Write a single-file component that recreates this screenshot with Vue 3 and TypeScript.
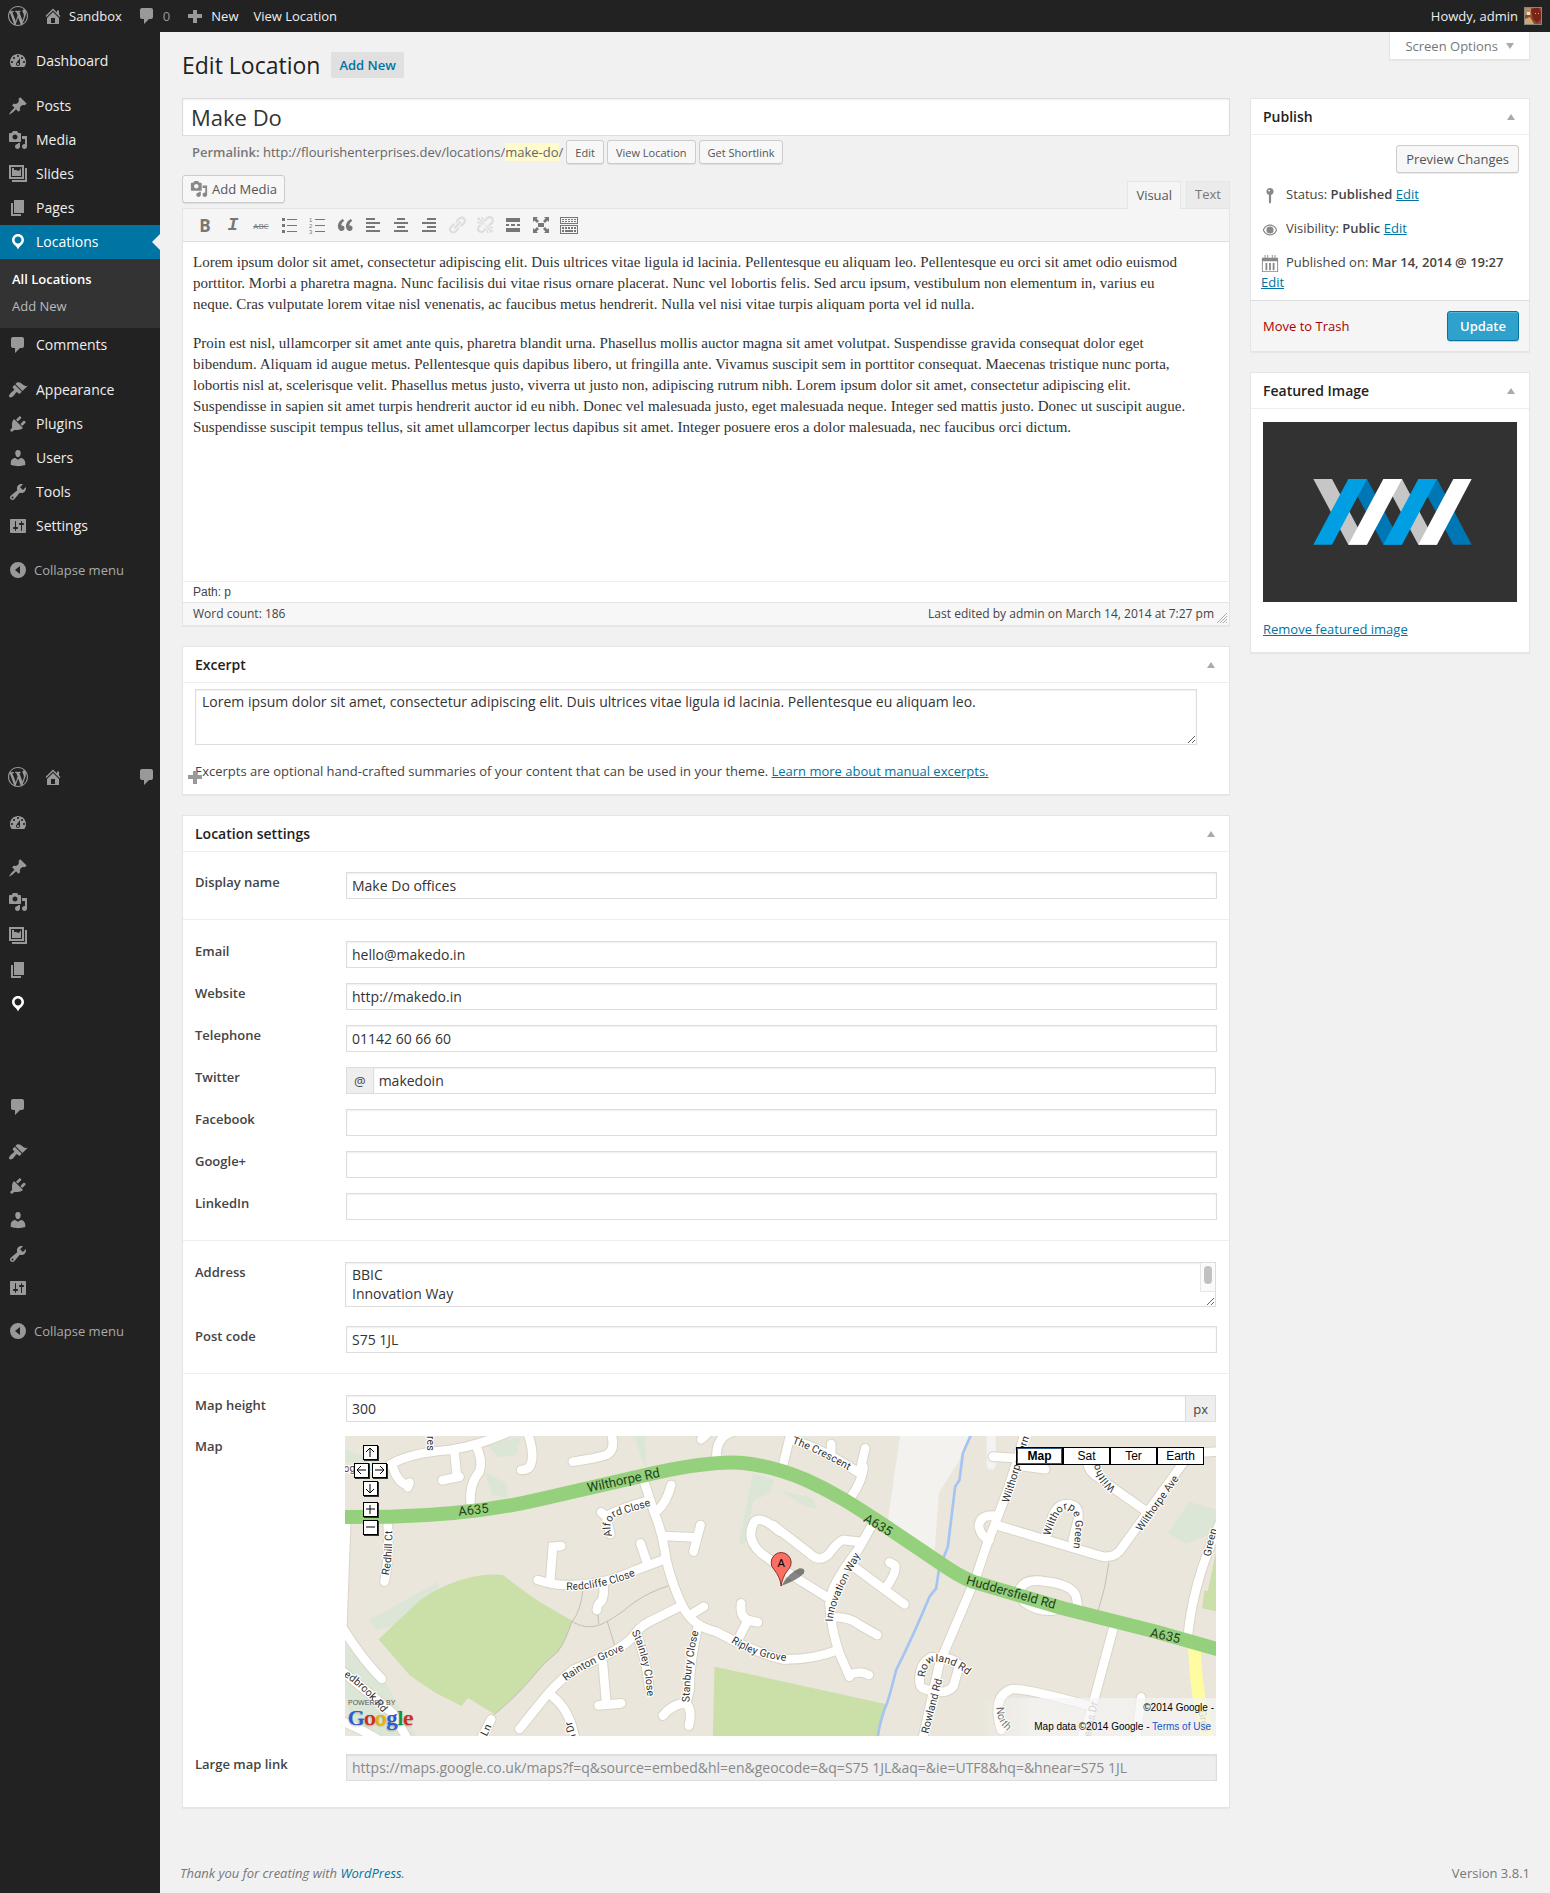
<script setup lang="ts">
import { h, ref } from 'vue'

const icons: Record<string, string> = {
  wordpress: 'M20 10c0-5.51-4.49-10-10-10C4.48 0 0 4.49 0 10c0 5.52 4.48 10 10 10 5.51 0 10-4.48 10-10zM7.78 15.37L4.37 6.22c.55-.02 1.17-.08 1.17-.08.5-.06.44-1.13-.06-1.11 0 0-1.45.11-2.37.11-.18 0-.37 0-.58-.01C4.12 2.69 6.87 1.11 10 1.11c2.33 0 4.45.87 6.05 2.34-.68-.11-1.65.39-1.65 1.58 0 .74.45 1.36.9 2.1.35.61.55 1.36.55 2.46 0 1.49-1.4 5-1.4 5l-3.03-8.37c.54-.02.82-.17.82-.17.5-.05.44-1.25-.06-1.22 0 0-1.44.12-2.38.12-.87 0-2.33-.12-2.33-.12-.5-.03-.56 1.2-.06 1.22l.92.08 1.26 3.41zM17.41 10c.24-.64.74-1.87.43-4.25.7 1.29 1.05 2.71 1.05 4.25 0 3.29-1.73 6.24-4.4 7.78.97-2.59 1.94-5.2 2.92-7.78zM6.1 18.09C3.12 16.65 1.11 13.53 1.11 10c0-1.3.23-2.48.72-3.59C3.25 10.3 4.67 14.2 6.1 18.09zm4.03-6.63l2.58 6.98c-.86.29-1.76.45-2.71.45-.79 0-1.57-.11-2.29-.33.81-2.38 1.62-4.74 2.42-7.1z',
  home: 'M16 8.5l1.53 1.53-1.06 1.06L10 4.6l-6.47 6.49-1.06-1.06L10 2.5l4 4v-2h2v4zm-6-2.46l6 5.99V18H4v-5.97zM12 17v-5H8v5h4z',
  comment: 'M5 2h9c1.1 0 2 .9 2 2v7c0 1.1-.9 2-2 2h-2l-5 5v-5H5c-1.1 0-2-.9-2-2V4c0-1.1.9-2 2-2z',
  plus: 'M8 4h4v4h5v4h-5v5H8v-5H3V8h5z',
  dashboard: 'M3.76 16h12.48c1.1-1.37 1.76-3.11 1.76-5 0-4.42-3.58-8-8-8s-8 3.58-8 8c0 1.89.66 3.63 1.76 5zM10 4c.55 0 1 .45 1 1s-.45 1-1 1-1-.45-1-1 .45-1 1-1zM6 6c.55 0 1 .45 1 1s-.45 1-1 1-1-.45-1-1 .45-1 1-1zm8 0c.55 0 1 .45 1 1s-.45 1-1 1-1-.45-1-1 .45-1 1-1zm-5.37 5.55L12 7v6c0 1.1-.9 2-2 2s-2-.9-2-2c0-.57.24-1.08.63-1.45zM4 10c.55 0 1 .45 1 1s-.45 1-1 1-1-.45-1-1 .45-1 1-1zm12 0c.55 0 1 .45 1 1s-.45 1-1 1-1-.45-1-1 .45-1 1-1zm-5 3c0-.55-.45-1-1-1s-1 .45-1 1 .45 1 1 1 1-.45 1-1z',
  pin: 'M10.44 3.02l1.82-1.82 6.36 6.35-1.83 1.82c-1.05-.68-2.48-.57-3.41.36l-.75.75c-.92.93-1.04 2.35-.35 3.41l-1.83 1.82-2.41-2.41-2.8 2.79c-.42.42-3.38 2.71-3.8 2.29s1.86-3.39 2.28-3.81l2.79-2.79L4.1 9.36l1.83-1.82c1.05.69 2.48.57 3.4-.36l.75-.75c.93-.92 1.05-2.35.36-3.41z',
  media: 'M13 11V4c0-.55-.45-1-1-1h-1.67L9 1H5L3.67 3H2c-.55 0-1 .45-1 1v7c0 .55.45 1 1 1h10c.55 0 1-.45 1-1zM7 4.5c1.38 0 2.5 1.12 2.5 2.5S8.38 9.5 7 9.5 4.5 8.38 4.5 7 5.62 4.5 7 4.5zM14 6h5v10.5c0 1.38-1.12 2.5-2.5 2.5S14 17.88 14 16.5s1.12-2.5 2.5-2.5c.17 0 .34.02.5.05V9h-3V6zm-4 8.05V13h2v3.5c0 1.38-1.12 2.5-2.5 2.5S7 17.88 7 16.5 8.12 14 9.5 14c.17 0 .34.02.5.05z',
  slides: 'M1 1h15v14H1zM3 3v10h11V3zM4 4h2v2h2l3 1 2-3v8H4zM17 4h2v14H4v-2h13z',
  page: 'M6 15V2h10v13H6zm-1 1h8v2H3V5h2v11z',
  location: 'M10 2C6.69 2 4 4.69 4 8c0 2.02 1.17 3.71 2.53 4.89.43.37 1.18.96 1.85 1.83.74.97 1.41 2.01 1.62 2.71.21-.7.88-1.74 1.62-2.71.67-.87 1.42-1.46 1.85-1.83C14.83 11.71 16 10.02 16 8c0-3.31-2.69-6-6-6zm0 2.56c1.9 0 3.44 1.54 3.44 3.44S11.9 11.44 10 11.44 6.56 9.9 6.56 8 8.1 4.56 10 4.56z',
  brush: 'M14.48 11.06L7.41 3.99l1.5-1.5c.5-.56 2.3-.47 3.51.32 1.21.8 1.43 1.28 2.91 2.1 1.18.64 2.45 1.26 4.45.85zm-.71.71L6.7 4.7 4.93 6.47c-.39.39-.39 1.02 0 1.41l1.06 1.06c.39.39.39 1.03 0 1.42-.6.6-1.43 1.11-2.21 1.69-.35.26-.7.53-1.01.84C1.43 14.23.4 16.08 1.4 17.07c.99 1 2.84-.03 4.18-1.36.31-.31.58-.66.85-1.02.57-.78 1.08-1.61 1.69-2.21.39-.39 1.02-.39 1.41 0l1.06 1.06c.39.39 1.02.39 1.41 0z',
  plug: 'M13.11 4.36L9.87 7.6 8 5.73l3.24-3.24c.35-.34 1.05-.2 1.56.32.52.51.66 1.21.31 1.55zm-8 1.77l.91-1.12 9.01 9.01-1.19.84c-.71.71-2.63 1.16-3.82 1.16H6.14L4.9 17.26c-.59.59-1.54.59-2.12 0-.59-.58-.59-1.53 0-2.12l1.24-1.24v-3.88c0-1.13.4-3.19 1.09-3.89zm7.26 3.97l3.24-3.24c.34-.35 1.04-.21 1.55.31.52.51.66 1.21.31 1.55l-3.24 3.25z',
  user: 'M10 9.25c-2.27 0-2.73-3.44-2.73-3.44C7 4.02 7.82 2 9.97 2c2.16 0 2.98 2.02 2.71 3.81 0 0-.41 3.44-2.68 3.44zm0 2.57L12.72 10c2.39 0 4.52 2.33 4.52 4.53v2.49s-3.65 1.13-7.24 1.13c-3.65 0-7.24-1.13-7.24-1.13v-2.49c0-2.25 1.94-4.48 4.47-4.48z',
  wrench: 'M16.68 9.77c-1.34 1.34-3.3 1.67-4.95.99l-5.41 6.52c-.99.99-2.59.99-3.58 0s-.99-2.59 0-3.57l6.52-5.42c-.68-1.65-.35-3.61.99-4.95 1.28-1.28 3.12-1.62 4.72-1.06l-2.89 2.89 2.82 2.82 2.86-2.87c.53 1.58.18 3.39-1.08 4.65zM3.81 16.21c.4.39 1.04.39 1.43 0 .4-.4.4-1.04 0-1.43-.39-.4-1.03-.4-1.43 0-.39.39-.39 1.03 0 1.43z',
  sliders: 'M18 16V4c0-.55-.45-1-1-1H3c-.55 0-1 .45-1 1v12c0 .55.45 1 1 1h14c.55 0 1-.45 1-1zM8 11h1c.55 0 1 .45 1 1s-.45 1-1 1H8v1.5c0 .28-.22.5-.5.5s-.5-.22-.5-.5V13H6c-.55 0-1-.45-1-1s.45-1 1-1h1V5.5c0-.28.22-.5.5-.5s.5.22.5.5V11zm5-2h-1c-.55 0-1-.45-1-1s.45-1 1-1h1V5.5c0-.28.22-.5.5-.5s.5.22.5.5V7h1c.55 0 1 .45 1 1s-.45 1-1 1h-1v5.5c0 .28-.22.5-.5.5s-.5-.22-.5-.5V9z',
  collapse: 'M10 2a8 8 0 1 0 0 16a8 8 0 1 0 0-16zM12 6v8L7 10z',
  ul: 'M3 3h3v3H3zM3 9h3v3H3zM3 15h3v3H3zM8 4h10v1H8zM8 10h10v1H8zM8 16h10v1H8z',
  ol: 'M8 4h10v1H8zM8 10h10v1H8zM8 16h10v1H8z',
  quote: 'M9.49 13.22c0-.74-.2-1.38-.61-1.9-.62-.78-1.83-.88-2.53-.72-.29-1.65 1.11-3.75 2.92-4.65L7.88 4c-2.73 1.3-5.42 4.28-4.96 8.05C3.21 14.43 4.59 16 6.54 16c.85 0 1.56-.25 2.12-.75s.83-1.18.83-2.03zm8.05 0c0-.74-.2-1.38-.61-1.9-.63-.78-1.83-.88-2.53-.72-.29-1.65 1.11-3.75 2.92-4.65L15.93 4c-2.73 1.3-5.41 4.28-4.95 8.05.29 2.38 1.66 3.95 3.61 3.95.85 0 1.56-.25 2.12-.75s.83-1.18.83-2.03z',
  left: 'M12 5V3H3v2h9zm5 4V7H3v2h14zm-5 4v-2H3v2h9zm5 4v-2H3v2h14z',
  center: 'M14 5V3H6v2h8zm3 4V7H3v2h14zm-3 4v-2H6v2h8zm3 4v-2H3v2h14z',
  right: 'M17 5V3H8v2h9zm0 4V7H3v2h14zm0 4v-2H8v2h9zm0 4v-2H3v2h14z',
  link: 'M17.74 2.76c1.68 1.69 1.68 4.41 0 6.1l-1.53 1.52c-1.12 1.12-2.7 1.47-4.14 1.09l2.62-2.61.76-.77.76-.76c.84-.84.84-2.2 0-3.04-.84-.85-2.2-.85-3.04 0l-.77.76-3.38 3.38c-.37-1.44-.02-3.02 1.1-4.14l1.52-1.53c1.69-1.68 4.42-1.68 6.1 0zM8.59 13.43l5.34-5.34c.42-.42.42-1.1 0-1.52-.44-.43-1.13-.39-1.53 0l-5.33 5.34c-.42.42-.42 1.1 0 1.52.44.43 1.13.39 1.52 0zm-.76 2.29l4.14-4.15c.38 1.44.03 3.02-1.09 4.14l-1.52 1.53c-1.69 1.68-4.41 1.68-6.1 0-1.68-1.68-1.68-4.42 0-6.1l1.53-1.52c1.12-1.12 2.7-1.47 4.14-1.1l-4.14 4.15c-.85.84-.85 2.2 0 3.05.84.84 2.2.84 3.04 0z',
  unlink: 'M17.74 2.26c1.68 1.69 1.68 4.41 0 6.1l-1.53 1.52c-.32.33-.69.58-1.08.77L13 10l1.69-1.64.76-.77.76-.76c.84-.84.84-2.2 0-3.04-.84-.85-2.2-.85-3.04 0l-.77.76-.76.76L10 7l-.65-2.14c.19-.38.44-.75.77-1.07l1.52-1.53c1.69-1.68 4.42-1.68 6.1 0zM2 4l8 6-6-8zm4-2l4 8-2-8H6zM2 6l8 4-8-2V6zm7.36 7.69L10 13l.74 2.35-1.38 1.39c-1.69 1.68-4.41 1.68-6.1 0-1.68-1.68-1.68-4.42 0-6.1l1.39-1.38L7 10l-.69.64-1.52 1.53c-.85.84-.85 2.2 0 3.04.84.85 2.2.85 3.04 0zM18 16l-8-6 6 8zm-4 2l-4-8 2 8h2zm4-4l-8-4 8 2v2z',
  more: 'M17 7V3H3v4h14zM6 11V9H3v2h3zm6 0V9H8v2h4zm5 0V9h-3v2h3zm0 6v-4H3v4h14z',
  full: 'M2 2h5L5.500 3.500 8 6 6 8 3.500 5.500 2 7zM18 2v5l-1.500-1.500L14 8l-2-2 2.500-2.500L13 2zM2 18v-5l1.500 1.500L6 12l2 2-2.500 2.500L7 18zM18 18h-5l1.500-1.500L12 14l2-2 2.500 2.500L18 13zM7 8h6v4H7z',
  keys: 'M1 2h18v7H1zM2 3v5h16V3zM3 4h2v1H3zM6 4h2v1H6zM9 4h2v1H9zM12 4h2v1h-2zM15 4h2v1h-2zM3 6h2v1H3zM6 6h2v1H6zM9 6h2v1H9zM12 6h2v1h-2zM15 6h2v1h-2zM1 10h18v9H1zM2 11v7h16v-7zM3 12h2v2H3zM6 12h2v2H6zM9 12h2v2H9zM12 12h2v2h-2zM15 12h2v2h-2zM3 15h2v2H3zM6 15h8v2H6zM15 15h2v2h-2z',
  status: 'M10 1a4 4 0 0 1 1.200 7.800V17L10 19l-1.200-2V8.800A4 4 0 0 1 10 1zM9 3a1 1 0 1 0 0 2a1 1 0 1 0 0-2z',
  eye: 'M10 4C6 4 3 7 2 10c1 3 4 6 8 6s7-3 8-6c-1-3-4-6-8-6zM10 5.200c3.300 0 5.700 2.300 6.700 4.800-1 2.500-3.400 4.800-6.700 4.800S4.300 12.500 3.300 10c1-2.500 3.400-4.800 6.700-4.800zM10 6a4 4 0 1 0 0 8a4 4 0 1 0 0-8z',
  calendar: 'M4 0h1v3h2V0h1v3h4V0h1v3h2V0h1v3h3v16H1V3h3zM2 7v11h16V7zM5 9h2v8H5zM9 9h2v8H9zM13 9h2v8h-2z',
}

const Icon = (props: { name: string }) =>
  h('svg', { viewBox: '0 0 20 20', width: 20, height: 20, 'aria-hidden': 'true' }, [
    h('path', { d: icons[props.name], fill: 'currentColor', 'fill-rule': 'evenodd' }),
  ])

interface MenuItem { label: string; icon: string; gap?: boolean; active?: boolean }
const menu: MenuItem[] = [
  { label: 'Dashboard', icon: 'dashboard' },
  { label: 'Posts', icon: 'pin', gap: true },
  { label: 'Media', icon: 'media' },
  { label: 'Slides', icon: 'slides' },
  { label: 'Pages', icon: 'page' },
  { label: 'Locations', icon: 'location', active: true },
  { label: 'Comments', icon: 'comment' },
  { label: 'Appearance', icon: 'brush', gap: true },
  { label: 'Plugins', icon: 'plug' },
  { label: 'Users', icon: 'user' },
  { label: 'Tools', icon: 'wrench' },
  { label: 'Settings', icon: 'sliders' },
]

const tools: { name: string; label: string; off?: boolean }[] = [
  { name: 'bold', label: 'Bold' },
  { name: 'italic', label: 'Italic' },
  { name: 'strike', label: 'Strikethrough' },
  { name: 'ul', label: 'Bulleted list' },
  { name: 'ol', label: 'Numbered list' },
  { name: 'quote', label: 'Blockquote' },
  { name: 'left', label: 'Align left' },
  { name: 'center', label: 'Align center' },
  { name: 'right', label: 'Align right' },
  { name: 'link', label: 'Insert link', off: true },
  { name: 'unlink', label: 'Remove link', off: true },
  { name: 'more', label: 'Insert More tag' },
  { name: 'full', label: 'Fullscreen' },
  { name: 'keys', label: 'Toolbar toggle' },
]

const title = ref('Make Do')
const excerpt = ref('Lorem ipsum dolor sit amet, consectetur adipiscing elit. Duis ultrices vitae ligula id lacinia. Pellentesque eu aliquam leo.')
const address = ref('BBIC\nInnovation Way')
const displayName = ref('Make Do offices')
const postCode = ref('S75 1JL')
const mapHeight = ref('300')
const mapLink = 'https://maps.google.co.uk/maps?f=q&source=embed&hl=en&geocode=&q=S75 1JL&aq=&ie=UTF8&hq=&hnear=S75 1JL'

const contacts = ref([
  { id: 'email', label: 'Email', value: 'hello@makedo.in', prefix: '' },
  { id: 'website', label: 'Website', value: 'http://makedo.in', prefix: '' },
  { id: 'telephone', label: 'Telephone', value: '01142 60 66 60', prefix: '' },
  { id: 'twitter', label: 'Twitter', value: 'makedoin', prefix: '@' },
  { id: 'facebook', label: 'Facebook', value: '', prefix: '' },
  { id: 'google', label: 'Google+', value: '', prefix: '' },
  { id: 'linkedin', label: 'LinkedIn', value: '', prefix: '' },
])

/* Map geometry: west and east halves, three units to a CSS pixel. */
const west = [
  'M150 105C190 80 260 65 330 60C400 50 450 30 500 10', 'M160 110Q175 160 205 165M210 158L205 172', 'M345 65L352 140M308 151L360 140',
  'M408 45Q432 90 420 125Q390 160 393 215', 'M565 10Q585 70 575 100Q570 120 545 120', 'M815 10Q830 60 800 75Q770 85 700 95',
  'M1131 80Q1130 20 1180 5', 'M1085 28L1110 5', 'M145 285Q150 380 135 455',
  'M995 165Q980 220 955 240', 'M975 318L1065 322M1083 285L1062 365', 'M970 390L890 420Q780 470 680 465Q640 465 595 450',
  'M665 348L640 350L632 455', 'M903 340L925 405', 'M792 470Q795 500 785 515Q775 520 772 540', 'M915 215Q830 240 800 260L785 247M800 260L812 312',
  'M1020 530L930 575Q900 590 880 620Q850 660 700 720Q640 770 610 810L540 897', 'M890 610Q920 680 930 780',
  'M1075 590Q1050 700 1050 780L1040 820Q1000 820 970 857M1040 820Q1060 840 1048 887', 'M790 700L800 815M777 826L845 820',
  'M640 800Q690 840 705 920', 'M10 595Q70 690 127 747', 'M10 725Q90 790 160 850L200 920', 'M10 875Q60 895 110 925',
  'M455 868L425 925', 'M1060 550L1093 530', 'M1205 520Q1200 560 1225 570L1255 577M1225 570L1200 620',
  'M1320 305Q1265 255 1245 275Q1215 325 1265 370L1340 425L1460 500', 'M20 280Q15 400 8 600',
  'M912 150L945 250Q970 310 980 390Q1000 470 1030 530Q1060 590 1130 605Q1250 670 1330 688Q1420 690 1495 660',
]
const east = [
  'M30 28Q120 50 240 130L257 55M252 110Q250 150 215 200', 'M155 42L155 70', 'M12 100L30 25',
  'M275 290L235 360Q150 470 150 520Q155 600 180 670L210 740M210 735Q240 720 268 735', 'M160 562Q210 560 240 585L293 615',
  'M225 412L375 523M325 465Q355 420 345 405L330 397', 'M-20 285L90 370Q120 400 148 372Q175 335 190 330L235 335',
  'M735 10Q710 110 670 220L620 350L590 440L480 700L430 925', 'M655 258Q600 250 598 290Q605 322 630 330',
  'M660 288L970 380Q1010 385 1030 350L1210 100Q1240 60 1330 66', 'M805 310Q820 222 860 222Q905 222 895 270L880 330',
  'M925 100Q925 125 960 145L1095 240', 'M640 80L720 85M720 107L797 118', 'M715 490Q730 440 800 455Q880 465 890 500L895 530',
  'M732 515Q780 550 830 540', 'M420 750Q420 700 455 682Q540 680 537 715L522 768Q500 800 430 775Q420 770 420 750',
  'M1000 600L930 860L905 925', 'M665 900Q635 800 695 778Q720 770 920 825', 'M1085 802L1070 925', 'M1330 260Q1240 450 1225 620',
]

interface RoadName { id: string; d: string; text: string; east?: boolean; faint?: boolean; major?: boolean }
const names: RoadName[] = [
  { id: 'n1', d: 'M746 187L1000 132', text: 'Wilthorpe Rd', major: true },
  { id: 'n2', d: 'M358 258L470 245', text: 'A635', major: true },
  { id: 'n3', d: 'M818 318Q798 262 850 253L950 222', text: 'Alford Close' },
  { id: 'n4', d: 'M148 436Q162 360 157 270', text: 'Redhill Ct' },
  { id: 'n5', d: 'M680 480Q790 482 920 423', text: 'Redcliffe Close' },
  { id: 'n6', d: 'M680 754Q740 705 892 646', text: 'Rainton Grove' },
  { id: 'n7', d: 'M876 606Q920 690 925 830', text: 'Stainley Close' },
  { id: 'n8', d: 'M1050 817Q1050 700 1086 570', text: 'Stanbury Close' },
  { id: 'n9', d: 'M1174 637Q1260 695 1400 697', text: 'Ripley Grove' },
  { id: 'n10', d: 'M442 920L470 860', text: 'Ln' },
  { id: 'n11', d: 'M712 928L686 840', text: 'n Dr' },
  { id: 'n12', d: 'M12 738Q80 780 170 900', text: 'edbrook Rd' },
  { id: 'n13', d: 'M262 18L262 90', text: 'res' },
  { id: 'n14', d: 'M12 126L120 122', text: 'og Rd' },
  { id: 'n15', d: 'M37 40Q110 65 240 140', text: 'The Crescent', east: true },
  { id: 'n16', d: 'M250 273L360 338', text: 'A635', east: true, major: true },
  { id: 'n17', d: 'M160 575Q160 510 270 330', text: 'Innovation Way', east: true },
  { id: 'n18', d: 'M558 462L880 553', text: 'Huddersfield Rd', east: true, major: true },
  { id: 'n19', d: 'M1110 620L1230 647', text: 'A635', east: true, major: true },
  { id: 'n20', d: 'M688 220L762 -20', text: 'Wilthorpe Farm', east: true },
  { id: 'n21', d: 'M812 318Q835 238 862 238Q900 238 882 350', text: 'Wilthorpe Green', east: true },
  { id: 'n22', d: 'M1010 172Q950 130 958 60', text: 'Wilthorpe', east: true },
  { id: 'n23', d: 'M1085 306L1230 102', text: 'Wilthorpe Ave', east: true },
  { id: 'n24', d: 'M1294 380Q1300 330 1330 250', text: 'Green', east: true },
  { id: 'n25', d: 'M437 742Q440 695 470 695Q520 695 575 745', text: 'Rowland Rd', east: true },
  { id: 'n26', d: 'M446 912L502 695', text: 'Rowland Rd', east: true },
  { id: 'n27', d: 'M652 832Q650 890 710 920', text: 'North', east: true },
  { id: 'n28', d: 'M930 940L962 775', text: 'ueens Dr', east: true, faint: true },
  { id: 'n29', d: 'M1256 842L1280 960', text: 'Gree', east: true, faint: true },
]
</script>

<template>
  <div class="page">
    <header class="bar">
      <a href="#" class="bar-item dim" aria-label="About WordPress"><Icon name="wordpress" /></a>
      <a href="#" class="bar-item"><Icon name="home" class="dim" />Sandbox</a>
      <a href="#" class="bar-item dim"><Icon name="comment" />0</a>
      <a href="#" class="bar-item"><Icon name="plus" class="dim" />New</a>
      <a href="#" class="bar-item">View Location</a>
      <a href="#" class="bar-item account">Howdy, admin
        <svg class="avatar" viewBox="0 0 16 16" width="16" height="16" aria-hidden="true">
          <rect width="16" height="16" fill="#8e4a32" /><path d="M0 0h6v7H0z" fill="#b98a5c" /><path d="M2 4h3v3H2z" fill="#eadfce" />
          <path d="M6 2l3-2h5l2 5v6l-4 4-4-4z" fill="#7a2419" /><path d="M0 11l5-2 4 7H0z" fill="#cfa96c" /><path d="M10 5h1v1h-1zM13 5h1v1h-1z" fill="#d9b08c" />
        </svg>
      </a>
    </header>

    <div class="body">
      <aside class="side">
        <nav class="menu" aria-label="Main menu">
          <template v-for="m in menu" :key="m.label">
            <a href="#" class="menu-item" :class="{ gap: m.gap, active: m.active }"><Icon :name="m.icon" />{{ m.label }}</a>
            <div v-if="m.active" class="submenu">
              <a href="#" class="current">All Locations</a>
              <a href="#">Add New</a>
            </div>
          </template>
          <button type="button" class="collapse"><Icon name="collapse" />Collapse menu</button>
        </nav>
        <div class="echo">
          <div class="echo-bar"><Icon name="wordpress" /><Icon name="home" /><Icon name="comment" class="end" /><Icon name="plus" class="over" /></div>
          <div class="menu">
            <template v-for="m in menu" :key="m.label">
              <div class="menu-item" :class="{ gap: m.gap, lit: m.active }"><Icon :name="m.icon" /></div>
            </template>
            <button type="button" class="collapse"><Icon name="collapse" />Collapse menu</button>
          </div>
        </div>
      </aside>

      <main class="main">
        <div class="head">
          <h1>Edit Location</h1>
          <a href="#" class="add-new">Add New</a>
          <button type="button" class="screen-options">Screen Options <i class="caret down"></i></button>
        </div>

        <div class="columns">
          <div class="primary">
            <input v-model="title" class="title" aria-label="Title">
            <div class="permalink">
              <span><b>Permalink:</b> http://flourishenterprises.dev/locations/<mark>make-do</mark>/</span>
              <button type="button" class="btn small">Edit</button>
              <button type="button" class="btn small">View Location</button>
              <button type="button" class="btn small">Get Shortlink</button>
            </div>
            <div class="media-row">
              <button type="button" class="btn add-media"><Icon name="media" />Add Media</button>
              <div class="tabs">
                <button type="button" class="tab on">Visual</button>
                <button type="button" class="tab">Text</button>
              </div>
            </div>
            <section class="editor">
              <div class="toolbar">
                <button v-for="t in tools" :key="t.name" type="button" :class="['tool', t.name, { off: t.off }]" :aria-label="t.label">
                  <span v-if="t.name === 'bold'">B</span>
                  <span v-else-if="t.name === 'italic'">I</span>
                  <span v-else-if="t.name === 'strike'">ABC</span>
                  <svg v-else-if="t.name === 'ol'" viewBox="0 0 20 20" width="20" height="20">
                    <path :d="icons.ol" fill="currentColor" />
                    <text x="2" y="7">1</text><text x="2" y="13">2</text><text x="2" y="19">3</text>
                  </svg>
                  <Icon v-else :name="t.name" />
                </button>
              </div>
              <div class="content" contenteditable="true" role="textbox" aria-label="Content">
                <p>Lorem ipsum dolor sit amet, consectetur adipiscing elit. Duis ultrices vitae ligula id lacinia. Pellentesque eu aliquam leo. Pellentesque eu orci sit amet odio euismod<br>porttitor. Morbi a pharetra magna. Nunc facilisis dui vitae risus ornare placerat. Nunc vel lobortis felis. Sed arcu ipsum, vestibulum non elementum in, varius eu<br>neque. Cras vulputate lorem vitae nisl venenatis, ac faucibus metus hendrerit. Nulla vel nisi vitae turpis aliquam porta vel id nulla.</p>
                <p>Proin est nisl, ullamcorper sit amet ante quis, pharetra blandit urna. Phasellus mollis auctor magna sit amet volutpat. Suspendisse gravida consequat dolor eget<br>bibendum. Aliquam id augue metus. Pellentesque quis dapibus libero, ut fringilla ante. Vivamus suscipit sem in porttitor consequat. Maecenas tristique nunc porta,<br>lobortis nisl at, scelerisque velit. Phasellus metus justo, viverra ut justo non, adipiscing rutrum nibh. Lorem ipsum dolor sit amet, consectetur adipiscing elit.<br>Suspendisse in sapien sit amet turpis hendrerit auctor id eu nibh. Donec vel malesuada justo, eget malesuada neque. Integer sed mattis justo. Donec ut suscipit augue.<br>Suspendisse suscipit tempus tellus, sit amet ullamcorper lectus dapibus sit amet. Integer posuere eros a dolor malesuada, nec faucibus orci dictum.</p>
              </div>
              <div class="path">Path: p</div>
              <div class="status">
                <span>Word count: 186</span><span>Last edited by admin on March 14, 2014 at 7:27 pm</span>
                <svg class="grip" viewBox="0 0 12 12" width="12" height="12" aria-hidden="true"><path d="M1 11L11 1M4 11l7-7M7 11l4-4M10 11l1-1" stroke="#aaa" /></svg>
              </div>
            </section>

            <section class="box">
              <h2>Excerpt<i class="caret"></i></h2>
              <div class="excerpt">
                <textarea v-model="excerpt" aria-label="Excerpt"></textarea>
                <p>Excerpts are optional hand-crafted summaries of your content that can be used in your theme. <a href="#">Learn more about manual excerpts.</a></p>
              </div>
            </section>

            <section class="box">
              <h2>Location settings<i class="caret"></i></h2>
              <div class="group first">
                <div class="row"><label for="display-name">Display name</label><input id="display-name" v-model="displayName" class="field"></div>
              </div>
              <div class="group">
                <div v-for="c in contacts" :key="c.id" class="row">
                  <label :for="c.id">{{ c.label }}</label>
                  <div v-if="c.prefix" class="addon"><span>{{ c.prefix }}</span><input :id="c.id" v-model="c.value" class="field"></div>
                  <input v-else :id="c.id" v-model="c.value" class="field">
                </div>
              </div>
              <div class="group">
                <div class="row">
                  <label for="address" class="narrow">Address</label>
                  <div class="address"><textarea id="address" v-model="address"></textarea><i class="thumb"></i></div>
                </div>
                <div class="row"><label for="post-code">Post code</label><input id="post-code" v-model="postCode" class="field"></div>
              </div>
              <div class="group last">
                <div class="row">
                  <label for="map-height">Map height</label>
                  <div class="addon trailing"><input id="map-height" v-model="mapHeight" class="field"><span>px</span></div>
                </div>
                <div class="row map-row">
                  <span class="label narrow">Map</span>
                  <div class="map">
                    <svg class="streets" viewBox="0 0 2616 900" preserveAspectRatio="xMidYMid slice" role="img" aria-label="Street map around Innovation Way">
                      <rect width="2616" height="900" fill="#eae6db" />
                      <g transform="translate(-15 -18)" stroke-linecap="round" fill="none">
                        <g fill="#dce6d6">
                          <path d="M90 570L295 455L297 475L215 572L110 600ZM440 45L545 20L530 75L480 82ZM437 125L500 160L504 202L458 197ZM15 640L140 760L232 920H60L15 800ZM885 15H915L922 115L905 85ZM1240 130L1305 150L1290 190L1242 212L1215 345L1198 340ZM15 60L80 80L120 100L15 95Z" />
                          <path d="M1320 180L1420 205L1432 240L1380 220ZM2485 310L2550 215L2635 240L2620 310L2540 342Z" />
                        </g>
                        <path d="M117 628L240 512Q310 460 400 440Q450 430 490 435Q560 490 600 515L698 572Q680 630 655 665Q610 700 580 740Q530 800 465 853L385 803L367 828L290 790Q230 750 210 735ZM1125 710L1320 752L1638 822Q1620 870 1615 920H1120ZM2635 340V545L2588 535L2595 482H2605Z" fill="#cbdfa9" />
                        <path d="M1682 15H1890L1860 90L1798 190L1785 370L1645 270Z" fill="#f3f2ef" />
                        <path d="M698 572Q680 630 655 665Q610 700 580 740Q530 800 465 853M730 480Q725 540 698 575Q740 600 780 585Q820 570 880 520Q930 485 985 468M775 555L778 580M803 573L825 645M2308 400Q2300 470 2275 545" stroke="#c4bfb3" stroke-width="3" />
                        <path d="M1893 18L1870 70L1860 150L1847 170L1825 350L1798 420L1790 475L1770 500Q1720 620 1670 720Q1645 820 1638 830Q1620 880 1615 920" stroke="#a4c4f4" stroke-width="8" />
                        <path d="M1955 20V105" stroke="#f3f3f3" stroke-width="27" />
                        <g stroke="#dad4c7" stroke-width="32">
                          <path v-for="d in west" :key="d" :d="d" />
                          <g transform="translate(1320 0)"><path v-for="d in east" :key="d" :d="d" /></g>
                        </g>
                        <g stroke="#fff" stroke-width="26">
                          <path v-for="d in west" :key="d" :d="d" />
                          <g transform="translate(1320 0)"><path v-for="d in east" :key="d" :d="d" /></g>
                        </g>
                        <path d="M2565 660Q2570 800 2605 925" stroke="#fffba0" stroke-width="38" />
                        <path d="M5 261L150 260Q400 255 600 208L950 128Q1120 92 1210 99Q1300 108 1400 150C1500 195 1570 245 1640 290L1800 398Q1860 440 1900 455L2170 535L2450 605L2650 662" stroke="#95d17c" stroke-width="42" />
                        <defs>
                          <template v-for="n in names" :key="n.id"><path :id="n.id" :d="n.d" /></template>
                        </defs>
                        <g v-for="n in names" :key="n.id" :transform="n.east ? 'translate(1320 0)' : undefined">
                          <text class="road" :class="{ faint: n.faint, major: n.major }"><textPath :href="'#' + n.id">{{ n.text }}</textPath></text>
                        </g>
                        <path d="M1327 467Q1345 430 1380 415Q1400 415 1393 430Q1375 450 1327 467Z" fill="#333" opacity=".6" />
                        <path d="M1325 467Q1322 440 1303 418A30 30 0 1 1 1347 418Q1328 440 1325 467Z" fill="#fc6e63" stroke="#8c2c25" stroke-width="3" />
                        <text x="1325" y="410" class="pin-letter">A</text>
                      </g>
                    </svg>
                    <div class="pan">
                      <button type="button" aria-label="Pan up"><svg viewBox="0 0 13 13"><path d="M6 11V2M2 6l4-4 4 4" /></svg></button>
                      <div>
                        <button type="button" aria-label="Pan left"><svg viewBox="0 0 13 13"><path d="M11 6H2M6 2L2 6l4 4" /></svg></button>
                        <button type="button" aria-label="Pan right"><svg viewBox="0 0 13 13"><path d="M2 6h9M7 2l4 4-4 4" /></svg></button>
                      </div>
                      <button type="button" aria-label="Pan down"><svg viewBox="0 0 13 13"><path d="M6 2v9M2 7l4 4 4-4" /></svg></button>
                      <button type="button" class="zoom" aria-label="Zoom in"><svg viewBox="0 0 13 13"><path d="M6 2v9M2 6h9" /></svg></button>
                      <button type="button" aria-label="Zoom out"><svg viewBox="0 0 13 13"><path d="M2 6h9" /></svg></button>
                    </div>
                    <div class="types">
                      <button type="button" class="on">Map</button><button type="button">Sat</button><button type="button">Ter</button><button type="button">Earth</button>
                    </div>
                    <div class="powered"><small>POWERED BY</small><div class="google"><b>G</b><b>o</b><b>o</b><b>g</b><b>l</b><b>e</b></div></div>
                    <div class="credit"><span>©2014 Google -</span><span>Map data ©2014 Google - <a href="#">Terms of Use</a></span></div>
                  </div>
                </div>
                <div class="row"><label for="map-link">Large map link</label><input id="map-link" class="field" :value="mapLink" disabled></div>
              </div>
            </section>
          </div>

          <div class="secondary">
            <section class="box">
              <h2>Publish<i class="caret"></i></h2>
              <div class="preview"><button type="button" class="btn">Preview Changes</button></div>
              <div class="pub"><Icon name="status" />Status: <b>Published</b> <a href="#">Edit</a></div>
              <div class="pub"><Icon name="eye" />Visibility: <b>Public</b> <a href="#">Edit</a></div>
              <div class="pub"><Icon name="calendar" />Published on: <b>Mar 14, 2014 @ 19:27</b> <a href="#">Edit</a></div>
              <div class="actions"><a href="#">Move to Trash</a><button type="button" class="update">Update</button></div>
            </section>
            <section class="box">
              <h2>Featured Image<i class="caret"></i></h2>
              <div class="featured">
                <svg viewBox="0 0 762 540" role="img" aria-label="Make Do logo">
                  <rect width="762" height="540" fill="#323232" />
                  <g transform="translate(-99 -363)">
                    <path d="M250 534H306L411 731H355ZM460 534H516L621 731H565Z" fill="#c6c6c6" />
                    <path d="M355 534H411L516 731H460ZM565 534H621L725 731H670Z" fill="#0077b5" />
                    <path d="M355 534H411L306 731H250ZM565 534H621L516 731H460Z" fill="#009fe3" />
                    <path d="M460 534H516L411 731H355ZM670 534H725L621 731H565Z" fill="#fff" />
                  </g>
                </svg>
                <a href="#">Remove featured image</a>
              </div>
            </section>
          </div>
        </div>

        <footer class="foot"><em>Thank you for creating with <a href="#">WordPress</a>.</em><span>Version 3.8.1</span></footer>
      </main>
    </div>
  </div>
</template>

<style>
body { background: #f1f1f1; }
</style>

<style scoped>
.page, .page * { box-sizing: border-box; }
.page { font: 13px/20px "Open Sans", sans-serif; color: #444; }
.page svg { display: block; flex: none; }
button, input, textarea { font-family: inherit; margin: 0; }
button { cursor: pointer; }
a { color: #0074a2; }

.bar { display: flex; align-items: center; gap: 15px; height: 32px; padding: 0 8px; background: #222; }
.bar-item { display: flex; align-items: center; gap: 6px; color: #eee; text-decoration: none; white-space: nowrap; }
.bar .dim { color: #999; }
.account { margin-left: auto; }
.page .avatar { border: 1px solid #82878c; width: 18px; height: 18px; }

.body { display: flex; align-items: stretch; }
.side { position: relative; flex: none; width: 160px; background: #222; }
.menu { display: flex; flex-direction: column; padding-top: 12px; }
.menu-item { position: relative; display: flex; align-items: center; gap: 8px; height: 34px; padding-left: 8px; font-size: 14px; color: #eee; text-decoration: none; }
.menu-item svg, .collapse svg, .echo-bar svg { color: #999; }
.menu-item.gap { margin-top: 11px; }
.menu-item.active { background: #0074a2; color: #fff; }
.menu-item.active svg, .menu-item.lit svg { color: #fff; }
.menu-item.active::after { content: ""; position: absolute; right: 0; top: 9px; border: 8px solid transparent; border-left: 0; border-right-color: #f1f1f1; }
.submenu { display: flex; flex-direction: column; padding: 7px 12px 8px; background: #333; }
.submenu a { line-height: 27px; color: #bbb; text-decoration: none; }
.submenu .current { color: #fff; font-weight: 600; }
.collapse { display: flex; align-items: center; gap: 6px; height: 34px; margin-top: 10px; padding: 0 8px; border: 0; background: none; color: #aaa; font-size: 13px; }
.echo { margin-top: 174px; }
.echo .menu { padding-top: 13px; }
.echo .collapse { margin-top: 9px; }
.echo-bar { position: relative; display: flex; align-items: center; gap: 15px; height: 32px; padding: 0 3px 0 8px; }
.echo-bar .end { margin-left: auto; }
.echo-bar .over { position: absolute; left: 185px; top: 6px; }
.menu-item.lit { margin-bottom: 69px; }

.main { flex: 1; min-width: 0; padding: 0 20px 10px 22px; }
.head { display: flex; align-items: center; height: 66px; }
h1 { margin: 0; font-size: 23px; font-weight: 400; line-height: 32px; color: #222; }
.add-new { margin-left: 11px; padding: 3px 8px; border-radius: 2px; background: #e0e0e0; font-weight: 600; text-decoration: none; }
.screen-options { display: flex; align-items: center; gap: 8px; align-self: flex-start; margin-left: auto; height: 28px; padding: 0 15px; border: 1px solid #e5e5e5; border-top: 0; background: #fff; box-shadow: 0 1px 1px rgba(0, 0, 0, .04); color: #777; font-size: 13px; }
.caret { width: 0; height: 0; border: 4px solid transparent; border-top: 0; border-bottom: 6px solid #aaa; }
.caret.down { border-bottom: 0; border-top: 6px solid #aaa; }

.columns { display: flex; gap: 20px; }
.primary { flex: 1; min-width: 0; }
.secondary { flex: none; width: 280px; }
.title { display: block; width: 100%; height: 38px; padding: 0 8px; border: 1px solid #ddd; border-radius: 0; background: #fff; box-shadow: inset 0 1px 2px rgba(0, 0, 0, .07); font-size: 22px; color: #333; }
.permalink { display: flex; align-items: center; gap: 3px; height: 24px; margin: 4px 0 11px; padding-left: 10px; color: #666; }
.permalink b { color: #777; font-weight: 600; }
mark { background: #fffbcc; color: inherit; }
.btn { height: 28px; padding: 0 9px; border: 1px solid #ccc; border-radius: 3px; background: #f7f7f7; box-shadow: 0 1px 0 rgba(0, 0, 0, .08); color: #555; font-size: 13px; white-space: nowrap; }
.btn.small { height: 24px; padding: 0 8px; font-size: 11px; }
.media-row { display: flex; justify-content: space-between; height: 33px; }
.add-media { display: flex; align-items: center; gap: 4px; padding: 0 7px; }
.page .add-media svg { width: 18px; height: 18px; color: #888; }
.tabs { display: flex; align-items: flex-end; gap: 5px; }
.tab { height: 27px; padding: 0 8px 2px; border: 1px solid #e5e5e5; border-bottom: 0; background: #ebebeb; color: #777; font-size: 13px; }
.tab.on { position: relative; height: 28px; margin-bottom: -1px; background: #f5f5f5; color: #555; }
.editor { border: 1px solid #e5e5e5; background: #fff; box-shadow: 0 1px 1px rgba(0, 0, 0, .04); }
.toolbar { display: flex; align-items: center; height: 33px; padding-left: 8px; border-bottom: 1px solid #dedede; background: #f5f5f5; }
.tool { display: flex; align-items: center; justify-content: center; width: 28px; height: 28px; padding: 0; border: 0; background: none; color: #777; }
.tool.off { color: #ddd; }
.tool text { font: 6px "Liberation Sans", sans-serif; fill: currentColor; }
.bold { font-size: 17px; font-weight: 700; }
.italic { font: italic 700 18px "Liberation Mono", monospace; }
.strike { font-size: 8px; text-decoration: line-through; }
.content { min-height: 339px; padding: 10px; font: 15px/21px "Liberation Serif", serif; color: #333; white-space: nowrap; overflow: hidden; }
.content p { margin: 0 0 18px; }
.path { height: 21px; padding-left: 10px; border-top: 1px solid #eee; font: 12px/20px "Liberation Sans", sans-serif; }
.status { position: relative; display: flex; justify-content: space-between; height: 23px; padding: 0 15px 0 10px; border-top: 1px solid #e5e5e5; background: #f7f7f7; font-size: 12px; line-height: 22px; }
.grip { position: absolute; right: 1px; bottom: 1px; }

.box { margin-bottom: 20px; border: 1px solid #e5e5e5; background: #fff; box-shadow: 0 1px 1px rgba(0, 0, 0, .04); }
.editor + .box { margin-top: 20px; }
h2 { display: flex; align-items: center; justify-content: space-between; height: 36px; margin: 0; padding: 0 14px 0 12px; border-bottom: 1px solid #eee; font-size: 14px; font-weight: 600; color: #222; }
textarea, .field { display: block; border: 1px solid #ddd; border-radius: 0; background: #fff; box-shadow: inset 0 1px 2px rgba(0, 0, 0, .07); color: #333; font-size: 14px; }
.excerpt { padding: 6px 32px 13px 12px; }
.excerpt textarea { width: 100%; height: 56px; padding: 2px 6px; line-height: 20px; }
.excerpt p { margin: 16px 0 0; }

.group { display: flex; flex-direction: column; gap: 15px; padding: 21px 12px 20px; }
.group.first { padding-top: 20px; }
.group + .group { border-top: 1px solid #eee; }
.group.last { padding-bottom: 26px; }
.row { display: flex; }
.row label, .label { flex: none; width: 151px; font-weight: 600; }
.row .narrow { width: 150px; }
.field { flex: 1; min-width: 0; height: 27px; padding: 0 5px; }
.field:disabled { background: #eee; color: #888; }
.addon { flex: 1; display: flex; padding-right: 1px; }
.addon span { display: flex; align-items: center; padding: 0 7px; border: 1px solid #ddd; border-right: 0; background: #eee; }
.addon.trailing span { border: 1px solid #ddd; border-left: 0; }
.address { position: relative; flex: 1; margin: 0 1px 4px 0; }
.address textarea { width: 100%; height: 45px; padding: 2px 20px 2px 6px; line-height: 19px; overflow: hidden; }
.thumb { position: absolute; top: 1px; right: 1px; width: 15px; height: 29px; border-left: 1px solid #e5e5e5; border-bottom: 1px solid #e5e5e5; background: #fafafa; }
.thumb::before { content: ""; position: absolute; left: 3px; top: 3px; width: 8px; height: 18px; border-radius: 4px; background: #c1c1c1; }

.map-row { margin: -1px 1px 3px 0; }
.map { position: relative; flex: 1; min-width: 0; height: 300px; overflow: hidden; font: 12px/16px "Liberation Sans", sans-serif; color: #000; }
.streets { width: 100%; height: 100%; }
.road { font: 32px Roboto, sans-serif; fill: #333; stroke: #fff; stroke-width: 7px; paint-order: stroke; stroke-linejoin: round; }
.road.major { font-size: 39px; stroke: none; fill: #22401a; }
.road.faint { fill: #888; stroke: none; }
.pin-letter { font: 33px "Liberation Sans", sans-serif; fill: #000; text-anchor: middle; }
.pan { position: absolute; left: 9px; top: 9px; display: flex; flex-direction: column; align-items: center; gap: 3px; }
.pan div { display: flex; gap: 3px; }
.pan button { width: 15px; height: 15px; padding: 0; border: 1px solid #000; background: #fff; box-shadow: 1px 1px 0 #333; }
.page .pan svg { width: 13px; height: 13px; fill: none; stroke: #000; }
.pan .zoom { margin-top: 3px; }
.types { position: absolute; right: 12px; top: 11px; display: flex; width: 188px; border: 1px solid #000; }
.types button { flex: 1; height: 16px; padding: 0; border: 0; background: #fff; font-size: 12px; line-height: 16px; }
.types button + button { border-left: 2px solid #000; }
.types .on { font-weight: 700; outline: 1px solid #345684; outline-offset: -1px; }
.powered { position: absolute; left: 3px; bottom: 7px; }
.powered small { display: block; font-size: 7px; line-height: 8px; color: #555; }
.google { font: 22px/22px "Liberation Serif", serif; }
.google b { font-weight: 400; color: #2a5bd7; text-shadow: 1px 0 0 currentColor, 0 1px 2px rgba(0, 0, 0, .4); }
.google b:nth-child(2), .google b:nth-child(6) { color: #d62d20; }
.google b:nth-child(3) { color: #e8b400; }
.google b:nth-child(5) { color: #14933a; }
.credit { position: absolute; right: 0; bottom: 0; display: flex; flex-direction: column; align-items: flex-end; width: 236px; height: 38px; padding: 0 2px; background: linear-gradient(90deg, rgba(245, 245, 245, 0), rgba(245, 245, 245, .7) 50px); font-size: 10px; line-height: 19px; }
.credit span + span { padding-right: 3px; }
.credit a { color: #15c; text-decoration: none; }

.preview { display: flex; justify-content: flex-end; padding: 10px 10px 5px; }
.pub { padding: 6px 10px 8px; }
.page .pub svg { display: inline-block; width: 18px; margin: -4px 7px -4px 0; vertical-align: middle; color: #888; }
.pub b { font-weight: 600; }
.actions { display: flex; align-items: center; justify-content: space-between; padding: 10px 10px 10px 12px; border-top: 1px solid #ddd; background: #f5f5f5; }
.actions a { color: #a00; text-decoration: none; }
.update { height: 30px; padding: 0 12px; border: 1px solid #0074a2; border-radius: 3px; background: #2ea2cc; box-shadow: inset 0 1px 0 rgba(120, 200, 230, .5), 0 1px 0 rgba(0, 0, 0, .15); color: #fff; font-size: 13px; font-weight: 600; }
.featured { display: flex; flex-direction: column; align-items: flex-start; gap: 17px; padding: 13px 12px; }
.page .featured svg { width: 100%; height: auto; }

.foot { display: flex; justify-content: space-between; margin: 35px 0 0 -2px; color: #777; }
.foot a { text-decoration: none; }
</style>
